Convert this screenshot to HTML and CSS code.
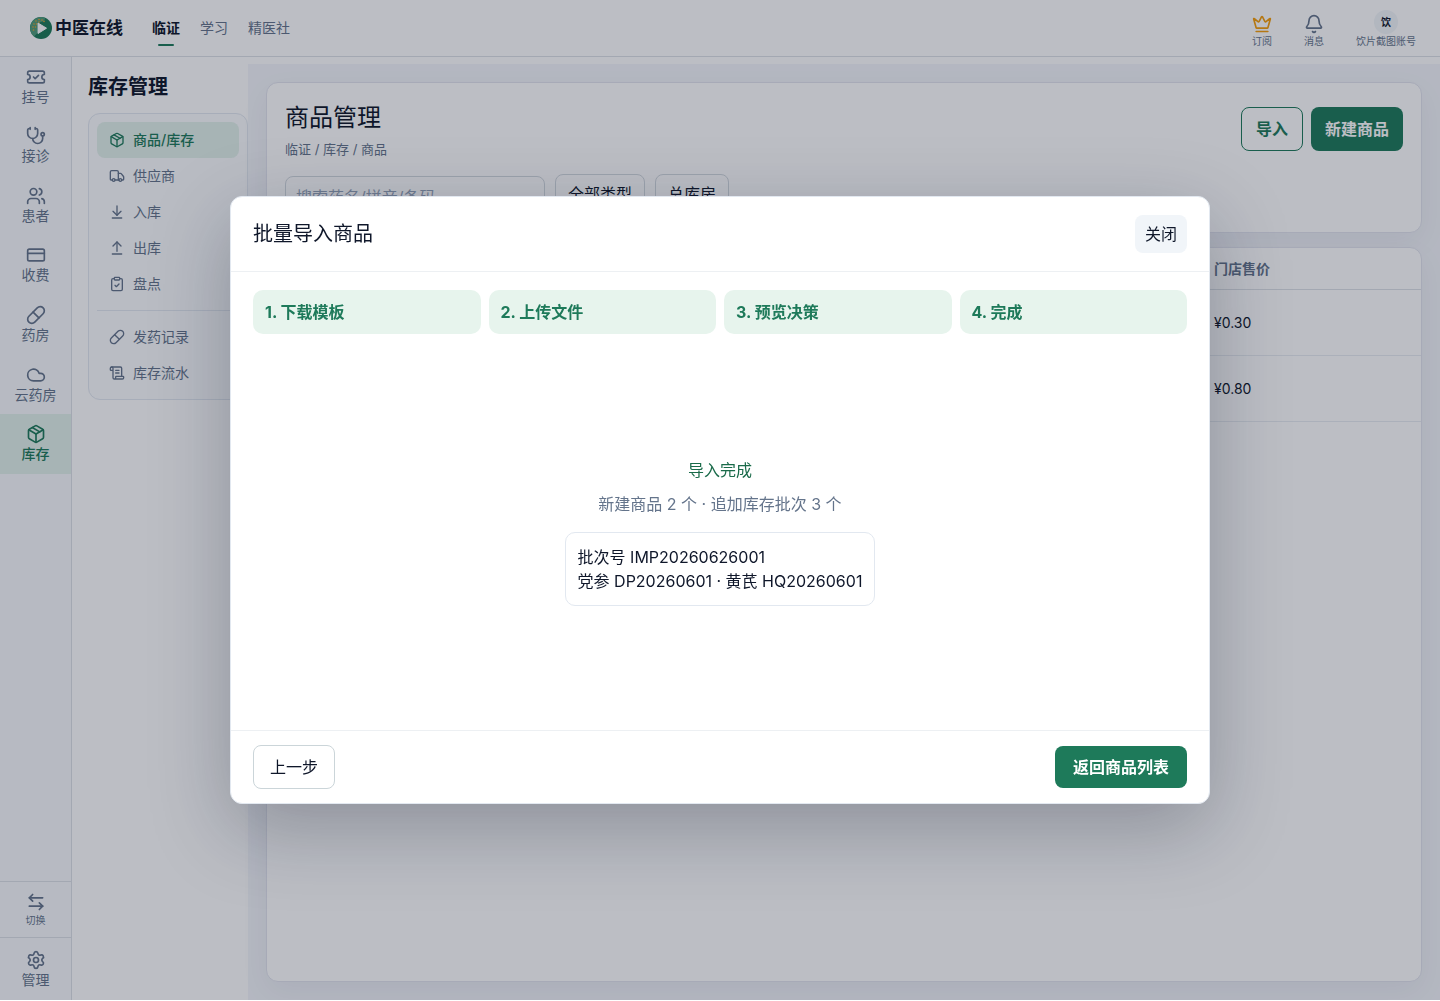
FILE: index.html
```html
<!DOCTYPE html>
<html lang="zh-CN">
<head>
<meta charset="utf-8">
<meta name="viewport" content="width=device-width, initial-scale=1">
<title>商品管理 - 中医在线</title>
<link rel="stylesheet" href="styles.css">
</head>
<body>
<svg class="sprite" aria-hidden="true">
  <symbol id="i-ticket" viewBox="0 0 24 24"><path d="M2 9a3 3 0 0 1 0 6v2a2 2 0 0 0 2 2h16a2 2 0 0 0 2-2v-2a3 3 0 0 1 0-6V7a2 2 0 0 0-2-2H4a2 2 0 0 0-2 2Z"/><path d="m9 12 2 2 4-4"/></symbol>
  <symbol id="i-steth" viewBox="0 0 24 24"><path d="M11 2v2M5 2v2M5 3H4a2 2 0 0 0-2 2v4a6 6 0 0 0 12 0V5a2 2 0 0 0-2-2h-1"/><path d="M8 15a6 6 0 0 0 12 0v-3"/><circle cx="20" cy="10" r="2"/></symbol>
  <symbol id="i-users" viewBox="0 0 24 24"><path d="M16 21v-2a4 4 0 0 0-4-4H6a4 4 0 0 0-4 4v2"/><path d="M16 3.128a4 4 0 0 1 0 7.744"/><path d="M22 21v-2a4 4 0 0 0-3-3.87"/><circle cx="9" cy="7" r="4"/></symbol>
  <symbol id="i-card" viewBox="0 0 24 24"><rect x="2" y="5" width="20" height="14" rx="2"/><path d="M2 10h20"/></symbol>
  <symbol id="i-pill" viewBox="0 0 24 24"><path d="m10.5 20.5 10-10a4.95 4.95 0 1 0-7-7l-10 10a4.95 4.95 0 1 0 7 7Z"/><path d="m8.5 8.5 7 7"/></symbol>
  <symbol id="i-cloud" viewBox="0 0 24 24"><path d="M17.5 19H9a7 7 0 1 1 6.71-9h1.79a4.5 4.5 0 1 1 0 9Z"/></symbol>
  <symbol id="i-package" viewBox="0 0 24 24"><path d="M11 21.73a2 2 0 0 0 2 0l7-4A2 2 0 0 0 21 16V8a2 2 0 0 0-1-1.73l-7-4a2 2 0 0 0-2 0l-7 4A2 2 0 0 0 3 8v8a2 2 0 0 0 1 1.73z"/><path d="M12 22V12"/><path d="M3.29 7 12 12l8.71-5"/><path d="m7.5 4.27 9 5.15"/></symbol>
  <symbol id="i-swap" viewBox="0 0 24 24"><path d="M8 3 4 7l4 4"/><path d="M4 7h16"/><path d="m16 21 4-4-4-4"/><path d="M20 17H4"/></symbol>
  <symbol id="i-gear" viewBox="0 0 24 24"><path d="M9.671 4.136a2.34 2.34 0 0 1 4.659 0 2.34 2.34 0 0 0 3.319 1.915 2.34 2.34 0 0 1 2.33 4.033 2.34 2.34 0 0 0 0 3.831 2.34 2.34 0 0 1-2.33 4.033 2.34 2.34 0 0 0-3.319 1.915 2.34 2.34 0 0 1-4.659 0 2.34 2.34 0 0 0-3.32-1.915 2.34 2.34 0 0 1-2.33-4.033 2.34 2.34 0 0 0 0-3.831A2.34 2.34 0 0 1 6.35 6.051a2.34 2.34 0 0 0 3.319-1.915"/><circle cx="12" cy="12" r="3"/></symbol>
  <symbol id="i-truck" viewBox="0 0 24 24"><path d="M14 18V6a2 2 0 0 0-2-2H4a2 2 0 0 0-2 2v11a1 1 0 0 0 1 1h2"/><path d="M15 18H9"/><path d="M19 18h2a1 1 0 0 0 1-1v-3.65a1 1 0 0 0-.22-.624l-3.48-4.35A1 1 0 0 0 17.52 8H14"/><circle cx="17" cy="18" r="2"/><circle cx="7" cy="18" r="2"/></symbol>
  <symbol id="i-in" viewBox="0 0 24 24"><path d="M12 17V3"/><path d="m6 11 6 6 6-6"/><path d="M19 21H5"/></symbol>
  <symbol id="i-out" viewBox="0 0 24 24"><path d="m18 9-6-6-6 6"/><path d="M12 3v14"/><path d="M5 21h14"/></symbol>
  <symbol id="i-clip" viewBox="0 0 24 24"><rect x="8" y="2" width="8" height="4" rx="1"/><path d="M16 4h2a2 2 0 0 1 2 2v14a2 2 0 0 1-2 2H6a2 2 0 0 1-2-2V6a2 2 0 0 1 2-2h2"/><path d="m9 14 2 2 4-4"/></symbol>
  <symbol id="i-scroll" viewBox="0 0 24 24"><path d="M15 12h-5M15 8h-5"/><path d="M19 17V5a2 2 0 0 0-2-2H4"/><path d="M8 21h12a2 2 0 0 0 2-2v-1a1 1 0 0 0-1-1H11a1 1 0 0 0-1 1v1a2 2 0 1 1-4 0V5a2 2 0 1 0-4 0v2a1 1 0 0 0 1 1h3"/></symbol>
  <symbol id="i-crown" viewBox="0 0 24 24"><path d="M11.562 3.266a.5.5 0 0 1 .876 0L15.39 8.87a1 1 0 0 0 1.516.294L21.183 5.5a.5.5 0 0 1 .798.519l-2.834 10.246a1 1 0 0 1-.956.734H5.81a1 1 0 0 1-.957-.734L2.02 6.02a.5.5 0 0 1 .798-.519l4.276 3.664a1 1 0 0 0 1.516-.294z"/><path d="M5 21h14"/></symbol>
  <symbol id="i-bell" viewBox="0 0 24 24"><path d="M10.268 21a2 2 0 0 0 3.464 0"/><path d="M3.262 15.326A1 1 0 0 0 4 17h16a1 1 0 0 0 .74-1.673C19.41 13.956 18 12.499 18 8A6 6 0 0 0 6 8c0 4.499-1.411 5.956-2.738 7.326"/></symbol>
</svg>

<div class="app">
  <header class="topbar">
    <a class="brand" href="#">
      <svg class="brand-mark" viewBox="0 0 22 22" aria-hidden="true">
        <circle cx="11" cy="11" r="11" fill="#1c7a58"/>
        <path d="M15 .8A11 11 0 0 0 4 19.500L7.500 16V6l7-2z" fill="#4f9c7a"/>
        <g fill="#e8a02c"><circle cx="6" cy="4" r=".8"/><circle cx="9" cy="2.500" r=".8"/><circle cx="12" cy="3" r=".8"/><circle cx="4" cy="7" r=".8"/><circle cx="6.500" cy="7" r=".8"/><circle cx="3" cy="10" r=".8"/><circle cx="5.500" cy="10" r=".8"/><circle cx="3.500" cy="13" r=".8"/><circle cx="9" cy="5" r=".8"/><circle cx="14" cy="4.500" r=".8"/></g>
        <path d="M8 6v10.500l8.500-5.300z" fill="#fff" stroke="#fff" stroke-linejoin="round"/>
      </svg>
      <span>中医在线</span>
    </a>
    <nav class="topnav" aria-label="主导航">
      <a class="is-active" href="#">临证</a>
      <a href="#">学习</a>
      <a href="#">精医社</a>
    </nav>
    <div class="tools">
      <button class="tool" type="button"><svg class="icon icon-gold"><use href="#i-crown"/></svg><span>订阅</span></button>
      <button class="tool" type="button"><svg class="icon"><use href="#i-bell"/></svg><span>消息</span></button>
      <button class="tool" type="button"><span class="avatar">饮</span><span>饮片截图账号</span></button>
    </div>
  </header>

  <div class="shell">
    <aside class="rail">
      <nav class="rail-main" aria-label="临证">
        <a href="#"><svg class="icon"><use href="#i-ticket"/></svg>挂号</a>
        <a href="#"><svg class="icon"><use href="#i-steth"/></svg>接诊</a>
        <a href="#"><svg class="icon"><use href="#i-users"/></svg>患者</a>
        <a href="#"><svg class="icon"><use href="#i-card"/></svg>收费</a>
        <a href="#"><svg class="icon"><use href="#i-pill"/></svg>药房</a>
        <a href="#"><svg class="icon"><use href="#i-cloud"/></svg>云药房</a>
        <a class="is-active" href="#"><svg class="icon"><use href="#i-package"/></svg>库存</a>
      </nav>
      <button class="rail-switch" type="button"><svg class="icon"><use href="#i-swap"/></svg>切换</button>
      <a class="rail-admin" href="#"><svg class="icon"><use href="#i-gear"/></svg>管理</a>
    </aside>

    <aside class="side">
      <h2>库存管理</h2>
      <nav class="side-card" aria-label="库存管理">
        <a class="is-active" href="#"><svg class="icon icon-sm"><use href="#i-package"/></svg>商品/库存</a>
        <a href="#"><svg class="icon icon-sm"><use href="#i-truck"/></svg>供应商</a>
        <a href="#"><svg class="icon icon-sm"><use href="#i-in"/></svg>入库</a>
        <a href="#"><svg class="icon icon-sm"><use href="#i-out"/></svg>出库</a>
        <a href="#"><svg class="icon icon-sm"><use href="#i-clip"/></svg>盘点</a>
        <hr>
        <a href="#"><svg class="icon icon-sm"><use href="#i-pill"/></svg>发药记录</a>
        <a href="#"><svg class="icon icon-sm"><use href="#i-scroll"/></svg>库存流水</a>
      </nav>
    </aside>

    <main class="content">
      <section class="card head-card">
        <div class="head-row">
          <div class="head-text">
            <h1>商品管理</h1>
            <p>临证 / 库存 / 商品</p>
          </div>
          <div class="head-actions">
            <button class="btn btn-outline" type="button">导入</button>
            <button class="btn btn-solid" type="button">新建商品</button>
          </div>
        </div>
        <div class="filters">
          <input type="search" placeholder="搜索药名/拼音/条码" aria-label="搜索商品">
          <select aria-label="商品类型"><option>全部类型</option></select>
          <select aria-label="库房"><option>总库房</option></select>
        </div>
      </section>
      <section class="card table-card">
        <table>
          <colgroup><col><col class="col-price"></colgroup>
          <thead><tr><td></td><th scope="col">门店售价</th></tr></thead>
          <tbody>
            <tr><td></td><td>¥0.30</td></tr>
            <tr><td></td><td>¥0.80</td></tr>
          </tbody>
        </table>
      </section>
    </main>
  </div>
</div>

<div class="overlay">
  <div class="modal" role="dialog" aria-modal="true" aria-labelledby="modal-title">
    <header class="modal-head">
      <h2 id="modal-title">批量导入商品</h2>
      <button class="btn-close" type="button">关闭</button>
    </header>
    <div class="modal-body">
      <ol class="steps">
        <li>1. 下载模板</li>
        <li>2. 上传文件</li>
        <li>3. 预览决策</li>
        <li>4. 完成</li>
      </ol>
      <div class="result">
        <p class="result-title">导入完成</p>
        <p class="result-sub">新建商品 2 个 · 追加库存批次 3 个</p>
        <div class="batch">
          <p>批次号 IMP20260626001</p>
          <p>党参 DP20260601 · 黄芪 HQ20260601</p>
        </div>
      </div>
    </div>
    <footer class="modal-foot">
      <button class="btn btn-plain" type="button">上一步</button>
      <button class="btn btn-finish" type="button">返回商品列表</button>
    </footer>
  </div>
</div>
</body>
</html>
```

FILE: styles.css
```css
:root {
  --ink: #0f172a;
  --muted: #64748b;
  --line: #dde1e6;
  --green: #1e7a5a;
  --green-soft: #e7f4ed;
}

* { box-sizing: border-box; }

body {
  margin: 0;
  background: #fff;
  color: var(--ink);
  font: 400 16px/24px Inter, "Noto Sans CJK SC", sans-serif;
}

h1, h2, p, ol { margin: 0; padding: 0; font-weight: 400; }
a { color: inherit; text-decoration: none; }
button, input, select { margin: 0; font: inherit; color: inherit; }
button { border: 0; background: none; padding: 0; cursor: pointer; }

.sprite { position: absolute; width: 0; height: 0; }

.icon {
  width: 20px;
  height: 20px;
  flex: none;
  fill: none;
  stroke: currentColor;
  stroke-width: 2;
  stroke-linecap: round;
  stroke-linejoin: round;
}
.icon-sm { width: 16px; height: 16px; }
.icon-gold { color: #f59e0b; }

.app {
  display: flex;
  flex-direction: column;
  min-height: calc(100vh - 1px);
}

/* Top bar */
.topbar {
  display: flex;
  align-items: center;
  height: 57px;
  padding: 0 24px 0 30px;
  border-bottom: 1px solid var(--line);
}
.brand { display: flex; align-items: center; gap: 3px; font-size: 17px; font-weight: 600; }
.brand-mark { width: 22px; height: 22px; }
.topnav { display: flex; gap: 20px; margin-left: 29px; font-size: 14px; color: var(--muted); }
.topnav a { display: flex; flex-direction: column; align-items: center; height: 56px; line-height: 56px; }
.topnav .is-active { color: var(--ink); font-weight: 600; }
.topnav .is-active::after {
  content: "";
  width: 16px;
  height: 2px;
  margin-top: -12px;
  border-radius: 1px;
  background: var(--green);
}
.tools { display: flex; gap: 32px; margin-left: auto; padding-top: 2px; }
.tool {
  display: flex;
  flex-direction: column;
  align-items: center;
  justify-content: flex-end;
  font-size: 10px;
  line-height: 14px;
  color: var(--muted);
}
.avatar {
  width: 24px;
  height: 24px;
  border-radius: 50%;
  background: #f1f5f9;
  color: var(--ink);
  font-weight: 600;
  line-height: 24px;
  text-align: center;
}

.shell { display: flex; flex: 1; }

/* Icon rail */
.rail {
  display: flex;
  flex-direction: column;
  width: 72px;
  border-right: 1px solid var(--line);
  background: #f8fafc;
  color: var(--muted);
  font-size: 14px;
  line-height: 20px;
}
.rail-main { display: grid; grid-auto-rows: 1fr; height: 417px; margin-bottom: auto; }
.rail a, .rail-switch { display: flex; flex-direction: column; align-items: center; justify-content: center; }
.rail .is-active { background: #e2f1ea; color: var(--green); font-weight: 500; }
.rail-switch { height: 56px; border-top: 1px solid var(--line); font-size: 10px; line-height: 16px; }
.rail .rail-admin { height: 63px; padding-top: 2px; border-top: 1px solid var(--line); }

/* Section menu */
.side { width: 176px; padding: 14px 0 0 16px; }
.side h2 { font-size: 20px; line-height: 32px; font-weight: 600; }
.side-card {
  display: flex;
  flex-direction: column;
  margin-top: 10px;
  padding: 8px;
  border: 1px solid #e2e8f0;
  border-radius: 12px;
  background: #fbfcfe;
  color: var(--muted);
  font-size: 14px;
}
.side-card a { display: flex; align-items: center; gap: 8px; height: 36px; padding: 0 12px; border-radius: 8px; }
.side-card .is-active { background: #e2f1ea; color: var(--green); font-weight: 500; }
.side-card hr { width: 100%; height: 1px; margin: 8px 0; border: 0; background: #e2e8f0; }

/* Main column */
.content {
  display: flex;
  flex-direction: column;
  flex: 1;
  gap: 14px;
  min-width: 0;
  margin-top: 7px;
  padding: 18px;
  background: #f4f6fb;
}
.card {
  border: 1px solid #e2e4ee;
  border-radius: 12px;
  background: #fff;
  box-shadow: 0 10px 30px rgba(15, 23, 42, 0.05);
}
.head-card { padding: 18px; }
.head-row { display: flex; align-items: center; justify-content: space-between; }
h1 { font-size: 24px; line-height: 34px; }
.head-text p { margin-top: 6px; font-size: 13px; line-height: 16px; color: var(--muted); }
.head-actions { display: flex; gap: 8px; }

.btn { height: 44px; padding: 0 14px; border: 1px solid transparent; border-radius: 8px; font-weight: 700; }
.btn-outline { border-color: var(--green); color: var(--green); font-weight: 600; }
.btn-solid { padding: 0 13px; background: var(--green); color: #fff; }
.btn-plain { padding: 0 16px; border-color: #cbd5d9; font-weight: 400; }
.btn-finish { height: 42px; padding: 0 17px; background: var(--green); color: #fff; }

.filters { display: flex; align-items: flex-end; gap: 10px; margin-top: 17px; }
.filters input, .filters select { border: 1px solid #d3dadf; border-radius: 8px; background: #fff; }
.filters input { width: 260px; height: 38px; padding: 4px 10px 0; }
.filters input::placeholder { color: #94a3b8; }
.filters select { height: 40px; padding: 0 11px 0 12px; appearance: none; }

.table-card { flex: 1; overflow: hidden; }
table { width: 100%; border-collapse: separate; border-spacing: 0; table-layout: fixed; font-size: 14px; }
.col-price { width: 219px; }
th, td { height: 66px; padding: 0 12px; border-bottom: 1px solid #e8ecf1; text-align: left; }
thead th, thead td { height: 42px; border-color: var(--line); color: var(--muted); font-weight: 600; }

/* Import dialog */
.overlay {
  position: fixed;
  inset: 0 0 1px;
  display: flex;
  align-items: center;
  justify-content: center;
  background: rgba(15, 23, 42, 0.28);
}
.modal {
  width: min(980px, 94vw);
  border: 1px solid #e2e8f0;
  border-radius: 12px;
  background: #fff;
  box-shadow: 0 24px 80px rgba(15, 23, 42, 0.28);
}
.modal-head {
  display: flex;
  align-items: center;
  justify-content: space-between;
  padding: 18px 22px;
  border-bottom: 1px solid #edf0f3;
}
.modal-head h2 { font-size: 20px; line-height: 30px; }
.btn-close { height: 38px; padding: 0 10px; border-radius: 8px; background: #f1f5f9; }
.modal-body { padding: 18px 22px; }
.steps { display: grid; grid-template-columns: repeat(4, 1fr); gap: 8px; list-style: none; }
.steps li {
  padding: 10px 12px;
  border-radius: 10px;
  background: var(--green-soft);
  color: var(--green);
  font-weight: 700;
}
.result {
  display: flex;
  flex-direction: column;
  align-items: center;
  justify-content: center;
  min-height: 360px;
  margin-top: 18px;
}
.result-title { color: #1a6b4a; }
.result-sub { margin-top: 10px; color: var(--muted); }
.batch { margin-top: 16px; padding: 12px; border: 1px solid #e2e8f0; border-radius: 10px; }
.modal-foot {
  display: flex;
  align-items: center;
  justify-content: space-between;
  padding: 14px 22px;
  border-top: 1px solid #edf0f3;
}
```
